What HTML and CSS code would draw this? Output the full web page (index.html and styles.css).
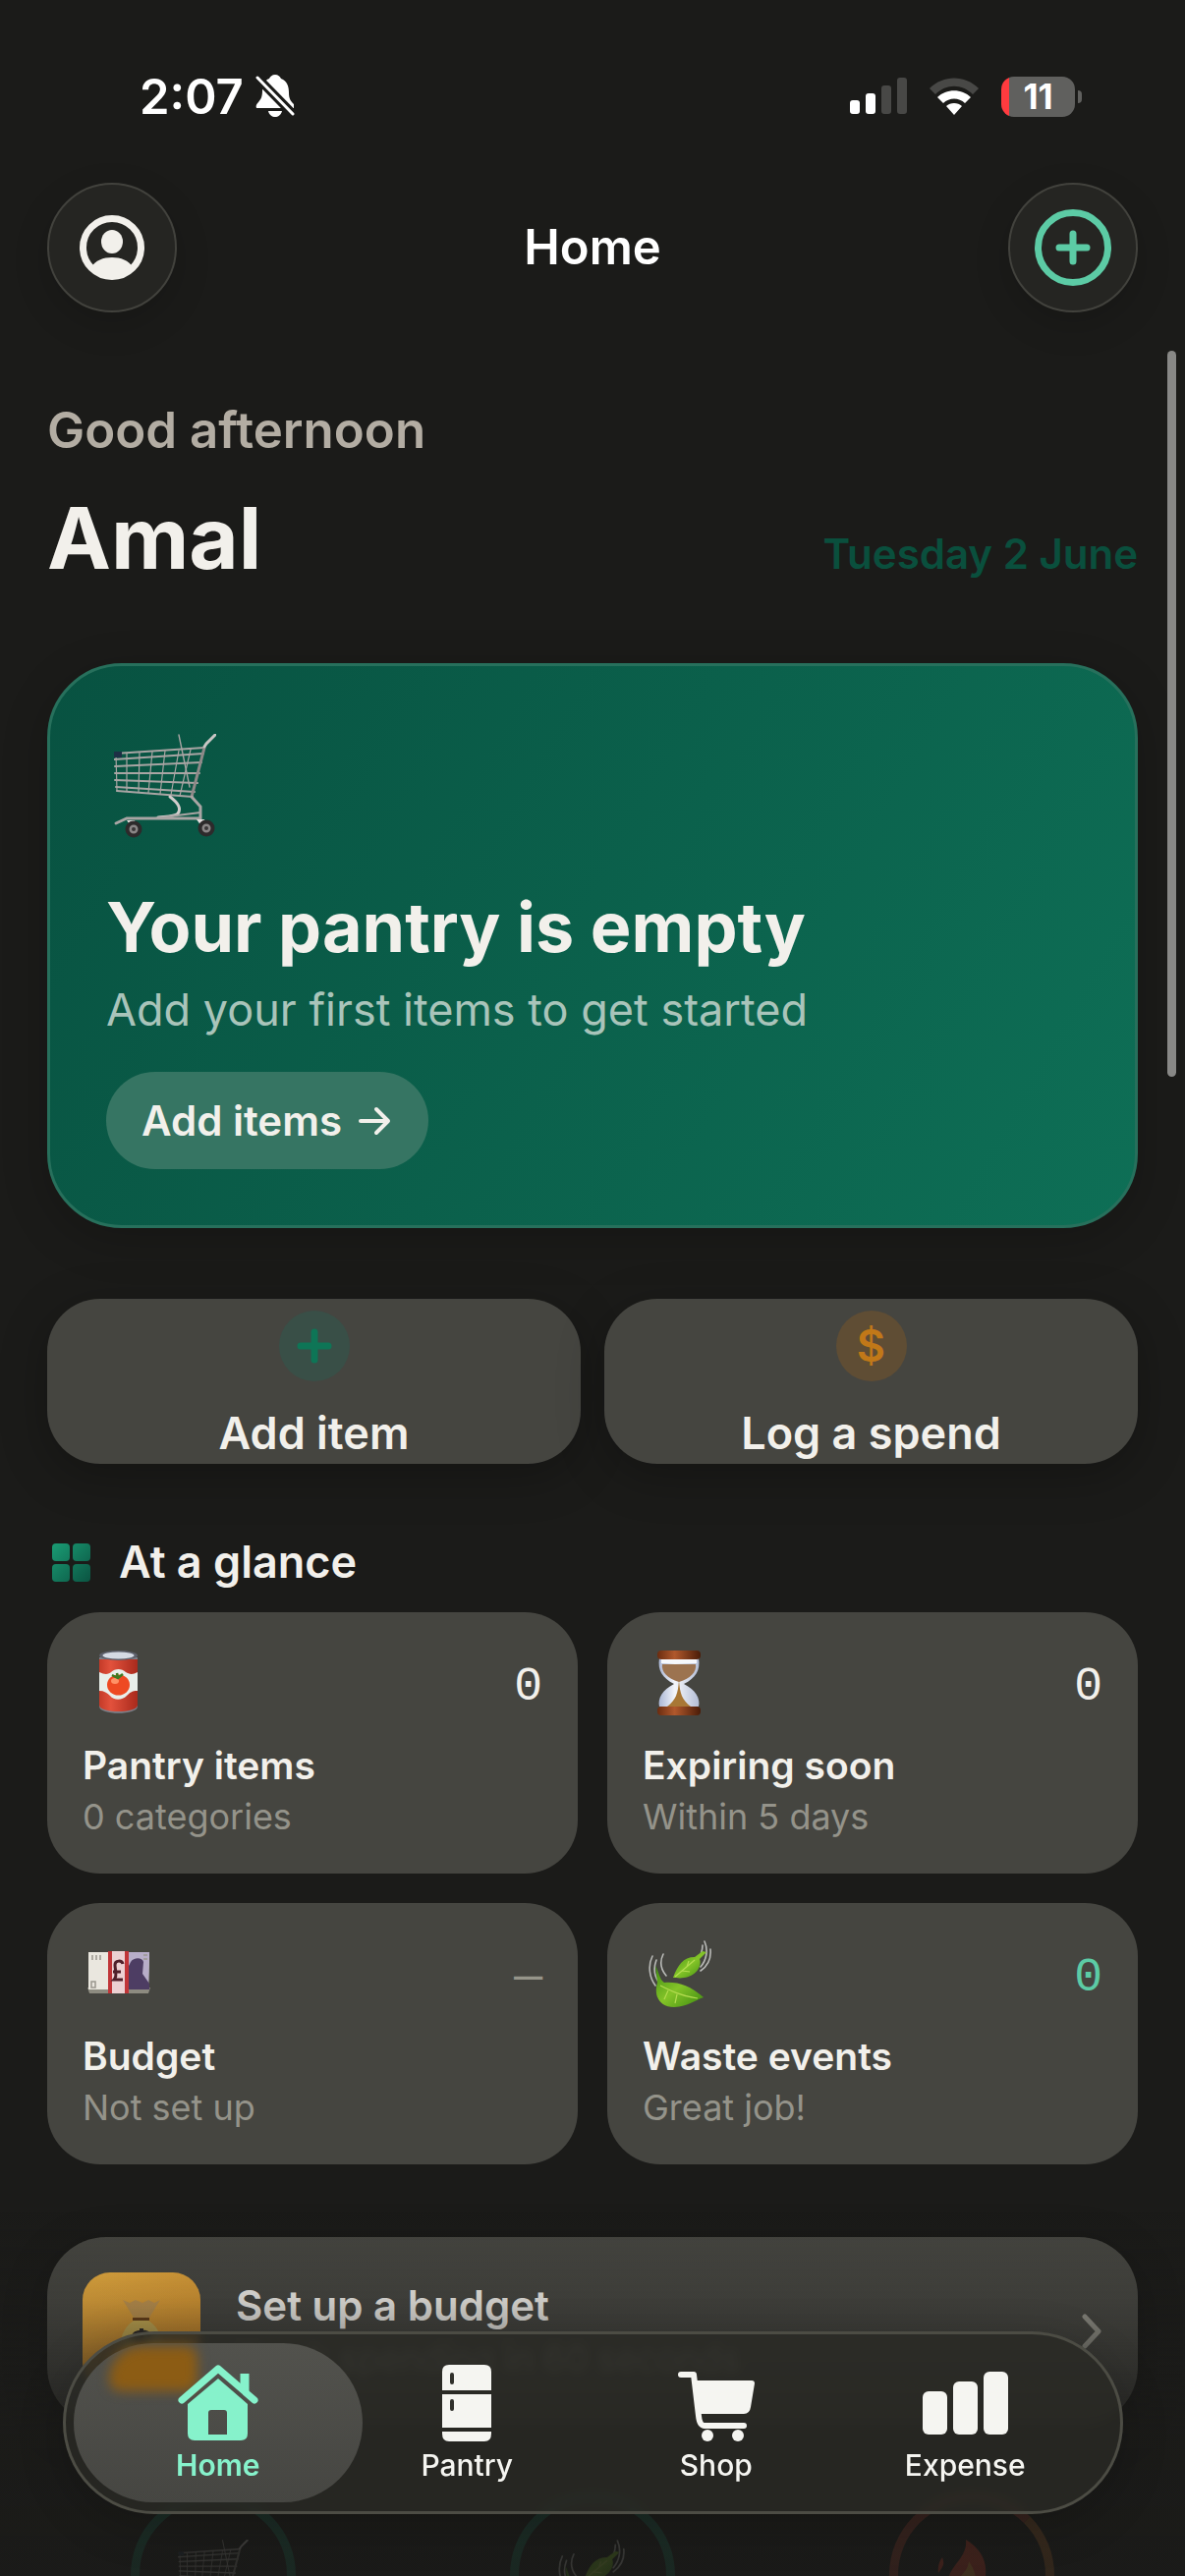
FILE: index.html
```html
<!DOCTYPE html>
<html lang="en">
<head>
<meta charset="utf-8">
<meta name="viewport" content="width=device-width, initial-scale=1">
<title>Home</title>
<link rel="stylesheet" href="styles.css">
</head>
<body>
<svg class="defs" width="0" height="0" aria-hidden="true">
  <defs>
    <linearGradient id="leaf-fill" x1="0" y1="0" x2="1" y2="1">
      <stop offset="0" stop-color="#3f8c14"/><stop offset=".5" stop-color="#84c428"/><stop offset="1" stop-color="#3d8a10"/>
    </linearGradient>
    <symbol id="cart" viewBox="0 0 104 106">
      <g fill="none" stroke="#a9a5a4" stroke-linecap="round">
        <path stroke-width="2" d="M1 20 92 14M0 26l91-6M1 33l88-4M1 40h86M1 47l84 3M2 54l80 5M3 58l77 6"/>
        <path stroke-width="1.200" d="M2 20l1 38M13 20v38M26 19l-1 40M39 18l-4 42M52 17l-5 44M66 17l-8 45M78 16 67 63"/>
        <path stroke-width="1.400" d="M66 1l11 53"/>
        <path stroke-width="3" stroke="#8d8988" d="M79 64 92 14"/>
        <path stroke-width="3" stroke="#c9c6c5" d="M92 13l2-3 9-9"/>
        <path stroke-width="3" stroke="#d0cccb" d="M57 64c8 6 12 12 8 17-3 3-11 3-20 4"/>
        <path stroke-width="3" d="M79 64l9 10v12H13L2 91"/>
        <path stroke-width="2" d="M88 80l-24 3-22 3"/>
      </g>
      <path fill="#1d2f45" d="M0 18h8v6H0z"/>
      <path fill="#e2dedd" d="M13 88h8l3 10h-4zM84 87h8l3 10h-4z"/>
      <g stroke="#2d2a2b" stroke-width="4" fill="#8a8686"><circle cx="20" cy="97" r="6.500"/><circle cx="94" cy="96" r="6.500"/></g>
      <g fill="#3a3738"><circle cx="20" cy="97" r="2"/><circle cx="94" cy="96" r="2"/></g>
    </symbol>
    <symbol id="leaves" viewBox="0 0 66 68">
      <g fill="none" stroke="#b9bab7" stroke-width="1.600" stroke-linecap="round">
        <path d="M4 16C-1 26 1 38 7 46M8 20c-3 8-2 16 2 22M15 14c-4 8-2 16 3 22"/>
        <path d="M55 5c0 6-2 11-6 16M57 1c4 9 2 19-4 26M63 9c1 9-3 17-10 22"/>
      </g>
      <path fill="url(#leaf-fill)" d="M25 38c5-13 10-21 22-21l8-6 4 1-7 7c3 8-5 18-16 19-4 1-8 0-11 0z"/>
      <path fill="url(#leaf-fill)" d="M7 26c3 4 4 14 9 17 14-1 26 3 40 15-9 3-15 9-30 10C11 68 5 56 9 43z"/>
      <path fill="none" stroke="#b4dc50" stroke-width="1.200" d="M12 46c10 5 22 11 38 13M27 37l20-17M20 51l-4 9M29 55l-2 9M34 31l8 1M39 27l2-6"/>
    </symbol>
  </defs>
</svg>

<div class="app">
  <div class="status">
    <div class="status-side">
      <span>2:07</span>
      <svg class="bell" viewBox="0 0 40 44" aria-label="Silent">
        <path fill="#fff" d="M20 0c3 0 5 2 6 4 6 2 8 8 8 14 0 7 2 9 5 12v4H1c-1-2 0-4 2-6 2-3 4-4 4-12C7 10 9 6 14 4c1-2 3-4 6-4z"/>
        <path fill="#fff" d="M13 37h14c-1 4-4 6-7 6s-6-2-7-6z"/>
        <path stroke="#1b1b19" stroke-width="9" d="M-1 0 41 43"/>
        <path stroke="#fff" stroke-width="3" stroke-linecap="round" d="M2 3 38 40"/>
      </svg>
    </div>
    <div class="status-side">
      <svg class="signal" viewBox="0 0 58 38" aria-label="Signal">
        <g fill="#fff"><rect y="23" width="10" height="14" rx="3"/><rect x="16" y="16" width="10" height="21" rx="3"/></g>
        <g fill="#484846"><rect x="32" y="8" width="10" height="29" rx="3"/><rect x="48" width="10" height="37" rx="3"/></g>
      </svg>
      <svg class="wifi" viewBox="0 0 52 38" aria-label="Wi-Fi">
        <path fill="#484846" d="M1 11C15-3 37-3 51 11l-6 6C34 6 18 6 7 17z"/>
        <path fill="#fff" d="M9 20c9-9 25-9 34 0l-6 6c-6-6-16-6-22 0zM18 29c4-4 12-4 16 0l-8 9z"/>
      </svg>
      <div class="battery"><span>11</span></div>
    </div>
  </div>

  <header class="topbar">
    <button class="round" type="button" aria-label="Profile">
      <svg width="66" height="66" viewBox="0 0 66 66">
        <circle cx="33" cy="33" r="29.500" fill="none" stroke="#f2f0eb" stroke-width="7"/>
        <ellipse cx="33" cy="27" rx="11" ry="12" fill="#f2f0eb"/>
        <path fill="#f2f0eb" d="M12 53c4-7 12-10 21-10s17 3 21 10C48 60 41 63 33 63s-15-3-21-10z"/>
      </svg>
    </button>
    <h1>Home</h1>
    <button class="round" type="button" aria-label="Add">
      <svg width="78" height="78" viewBox="0 0 78 78" fill="none" stroke="#5ccba5" stroke-width="7" stroke-linecap="round">
        <circle cx="39" cy="39" r="35.500"/><path d="M39 25v28M25 39h28"/>
      </svg>
    </button>
  </header>

  <main>
    <p class="greeting">Good afternoon</p>
    <div class="name-row">
      <h2>Amal</h2>
      <time datetime="06-02">Tuesday 2 June</time>
    </div>

    <section class="hero">
      <svg class="hero-cart" aria-hidden="true"><use href="#cart"/></svg>
      <h3>Your pantry is empty</h3>
      <p>Add your first items to get started</p>
      <button class="pill" type="button">Add items
        <svg width="34" height="30" viewBox="0 0 34 30" fill="none" stroke="#f2f0eb" stroke-width="4" stroke-linecap="round" stroke-linejoin="round"><path d="M3 15h28M19 3l12 12-12 12"/></svg>
      </button>
    </section>

    <div class="actions">
      <button type="button">
        <span class="badge badge-green"><svg width="36" height="36" viewBox="0 0 36 36" stroke="#0e7556" stroke-width="7" stroke-linecap="round"><path d="M18 4v28M4 18h28"/></svg></span>
        Add item
      </button>
      <button type="button">
        <span class="badge badge-amber">$</span>
        Log a spend
      </button>
    </div>

    <h3 class="section-title">
      <svg width="39" height="39" viewBox="0 0 39 39" aria-hidden="true">
        <defs><linearGradient id="grid-fill" gradientUnits="userSpaceOnUse" x1="0" y1="0" x2="39" y2="39"><stop offset="0" stop-color="#1a9c74"/><stop offset="1" stop-color="#0b5442"/></linearGradient></defs>
        <g fill="url(#grid-fill)"><rect width="18" height="18" rx="4"/><rect x="21" width="18" height="18" rx="4"/><rect y="21" width="18" height="18" rx="4"/><rect x="21" y="21" width="18" height="18" rx="4"/></g>
      </svg>
      At a glance
    </h3>

    <div class="tiles">
      <article class="tile">
        <div class="tile-top">
          <svg width="72" height="72" viewBox="0 0 72 72" aria-hidden="true">
            <defs><linearGradient id="can-red"><stop offset="0" stop-color="#c43a28"/><stop offset=".3" stop-color="#e2513c"/><stop offset="1" stop-color="#a92a1c"/></linearGradient></defs>
            <path fill="#7c7f88" d="M17 10v50c0 9 39 9 39 0V10z"/>
            <path fill="url(#can-red)" d="M17 12v47c2 8 37 8 39 0V12z"/>
            <path fill="#e9efea" d="M17 25c6 3 10 2 12 0 4-4 11-4 15 0 3 2 7 3 12 0v19c-6 0-8 2-11 5-5 5-13 5-17 0-3-3-6-5-11-5z"/>
            <ellipse cx="36.500" cy="8" rx="19.500" ry="5" fill="#5d606b"/><ellipse cx="36.500" cy="8" rx="16" ry="3.500" fill="#d5dae4"/>
            <ellipse cx="36.500" cy="38" rx="11.500" ry="10.500" fill="#ee4a22"/><ellipse cx="33" cy="34" rx="4" ry="3" fill="#ff9266"/>
            <path stroke="#3c7a20" stroke-width="2.500" fill="none" d="M30 28l6 3 5-4M36 31l-1-5"/>
          </svg>
          <span class="count">0</span>
        </div>
        <h4>Pantry items</h4>
        <p>0 categories</p>
      </article>
      <article class="tile">
        <div class="tile-top">
          <svg width="72" height="72" viewBox="0 0 72 72" aria-hidden="true">
            <defs>
              <linearGradient id="wood"><stop offset="0" stop-color="#6a2c10"/><stop offset=".4" stop-color="#b0582c"/><stop offset="1" stop-color="#4a1c08"/></linearGradient>
              <linearGradient id="glass"><stop offset="0" stop-color="#aab6d4"/><stop offset=".4" stop-color="#f4f6fb"/><stop offset="1" stop-color="#b4bed6"/></linearGradient>
            </defs>
            <path fill="url(#glass)" d="M17 11h40c2 12-3 20-15 26 12 6 17 15 15 23H17c-2-8 3-17 15-23C20 31 15 23 17 11z"/>
            <path fill="#9c7350" d="M20 17h34c1 8-5 14-17 18-12-4-18-10-17-18z"/>
            <path fill="#f6f8fc" d="M19 11h36v5H19z"/>
            <path fill="#a87735" d="M37 33c1 14 3 20 12 27H25c9-7 11-13 12-27z"/>
            <rect x="15" y="3" width="44" height="9" rx="4" fill="url(#wood)"/><rect x="15" y="60" width="44" height="9" rx="4" fill="url(#wood)"/>
          </svg>
          <span class="count">0</span>
        </div>
        <h4>Expiring soon</h4>
        <p>Within 5 days</p>
      </article>
      <article class="tile">
        <div class="tile-top">
          <svg width="72" height="72" viewBox="0 0 72 72" aria-hidden="true">
            <path fill="#8d8b80" d="M5 50h64l-2 6H7z"/>
            <path fill="#eae7df" d="M6 14h62l-1 38H6z"/>
            <path fill="#b7adc8" d="M44 14h24l-1 38H44z"/>
            <path fill="#4d3d63" d="M49 24c3-5 12-5 13 0l-1 12 7 10v6H46V30z"/>
            <path fill="none" stroke="#9a978f" stroke-width="1.500" d="M10 17v5M14 17v5M18 17v5M62 17h4M62 21h4M9 44h4v6H9z"/>
            <path fill="#ecd0d2" d="M29 13h15v43H29z"/><path fill="#c03538" d="M26 13h4v43h-4zM43 13h4v43h-4z"/>
            <path fill="none" stroke="#50202a" stroke-width="3" d="M41 26c-1-4-8-4-8 1 0 5 3 11-1 15h9M31 34h8"/>
          </svg>
          <span class="count muted">—</span>
        </div>
        <h4>Budget</h4>
        <p>Not set up</p>
      </article>
      <article class="tile">
        <div class="tile-top">
          <svg class="tile-leaves" aria-hidden="true"><use href="#leaves"/></svg>
          <span class="count good">0</span>
        </div>
        <h4>Waste events</h4>
        <p>Great job!</p>
      </article>
    </div>

    <a class="budget" href="#budget">
      <span class="budget-icon">
        <svg width="60" height="66" viewBox="0 0 60 66" aria-hidden="true">
          <path fill="#c09450" d="M11 1l7 3 6-3 7 3 6-3 6 3 6-3-11 18H22z"/><path fill="#6a4018" d="M21 19h17v3H21z"/>
          <path fill="#cbae54" d="M22 22h15c8 5 14 14 13 27-1 13-40 13-41 0-1-14 6-22 13-27z"/>
          <path fill="none" stroke="#2e2a28" stroke-width="4" d="M39 38c-3-6-17-6-17 1 0 6 16 4 16 10 0 6-14 6-17 1M30 30v27"/>
        </svg>
      </span>
      <span class="budget-text"><strong>Set up a budget</strong><span>Track spending in 60 seconds</span></span>
      <svg width="21" height="36" viewBox="0 0 21 36" fill="none" stroke="#94938a" stroke-width="5" stroke-linecap="round" stroke-linejoin="round" aria-hidden="true"><path d="M3 3l14 15L3 33"/></svg>
    </a>

    <div class="rings">
      <div class="ring ring-green"><svg aria-hidden="true"><use href="#cart"/></svg></div>
      <div class="ring ring-green"><svg aria-hidden="true"><use href="#leaves"/></svg></div>
      <div class="ring ring-fire">
        <svg viewBox="0 0 72 72" aria-hidden="true"><path fill="#d8402a" d="M30 0c14 8 22 22 20 36 5 16-4 34-20 35-16 0-26-16-18-30C14 26 32 18 30 0zM6 18c3 8 0 10-4 16-1-7 1-12 4-16z"/><path fill="#f2963a" d="M33 22c12 16 10 46-5 46-12-4-14-20-5-29 5-5 9-9 10-17z"/></svg>
      </div>
    </div>
  </main>
</div>

<div class="fade"></div>
<div class="scrollbar"></div>

<nav class="tabs">
  <a class="tab active" href="#home" aria-current="page">
    <svg width="84" height="78" viewBox="0 0 84 78" aria-hidden="true">
      <g fill="none" stroke="#86f2cb" stroke-linecap="round" stroke-linejoin="round"><path stroke-width="7" d="M5 36 42 4l37 32"/><path stroke-width="9" stroke-linecap="butt" d="M69 9v18"/></g>
      <path fill="#86f2cb" fill-rule="evenodd" d="M42 14l30 26v30q0 7-7 7H18q-7 0-7-7V40zM35 46q-3 0-3 3v22h19V49q0-3-3-3z"/>
    </svg>
    Home
  </a>
  <a class="tab" href="#pantry">
    <svg width="50" height="78" viewBox="0 0 50 78" aria-hidden="true">
      <path fill="#f5f5f1" d="M0 26V7q0-7 7-7h36q7 0 7 7v19zM0 30h50v34H0zM0 68h50v2q0 8-7 8H7q-7 0-7-8z"/>
      <path stroke="#30302b" stroke-width="4" stroke-linecap="round" d="M10 10v8M10 37v8"/>
    </svg>
    Pantry
  </a>
  <a class="tab" href="#shop">
    <svg width="80" height="78" viewBox="0 0 80 78" aria-hidden="true">
      <path fill="none" stroke="#f5f5f1" stroke-width="6" stroke-linecap="round" stroke-linejoin="round" d="M4 10h13l5 42q1 10 6 10h40"/>
      <path fill="#f5f5f1" d="M19 16h57q3 0 3 3l-4 24q-1 7-7 7H22z"/>
      <ellipse cx="31" cy="72" rx="6" ry="6" fill="#f5f5f1"/><ellipse cx="62" cy="72" rx="6" ry="6" fill="#f5f5f1"/>
    </svg>
    Shop
  </a>
  <a class="tab" href="#expense">
    <svg width="87" height="78" viewBox="0 0 87 78" fill="#f5f5f1" aria-hidden="true">
      <rect y="27" width="25" height="44" rx="6"/><rect x="31" y="17" width="25" height="54" rx="6"/><rect x="62" y="7" width="25" height="64" rx="6"/>
    </svg>
    Expense
  </a>
</nav>
</body>
</html>
```
FILE: styles.css
```css
* { box-sizing: border-box; }

body {
  margin: 0;
  height: 100vh;
  overflow: hidden;
  background: #1b1b19;
  color: #f2f0eb;
  font-family: Inter, "Liberation Sans", sans-serif;
}

h1, h2, h3, h4, p { margin: 0; }
button { border: 0; padding: 0; background: none; color: inherit; font-family: inherit; }
a { color: inherit; text-decoration: none; }
svg { display: block; flex: none; }
.defs { position: absolute; }

.app { padding: 0 48px; }

/* status bar */
.status {
  display: flex;
  justify-content: space-between;
  align-items: center;
  height: 52px;
  margin-top: 72px;
  padding: 0 56px 0 94px;
  color: #fff;
  font-size: 49px;
  font-weight: 600;
}
.status-side { display: flex; align-items: center; }
.bell { width: 40px; height: 44px; margin-left: 12px; }
.signal { width: 58px; height: 38px; }
.wifi { width: 52px; height: 38px; margin: 0 22px; }
.battery {
  position: relative;
  width: 75px;
  height: 41px;
  margin-right: 8px;
  border-radius: 13px;
  background: linear-gradient(90deg, #ff3b3f 8px, #60605e 8px);
  font-size: 35px;
  font-weight: 700;
  line-height: 41px;
  text-align: center;
}
.battery::after {
  content: "";
  position: absolute;
  left: 78px;
  top: 14px;
  width: 4px;
  height: 13px;
  border-radius: 0 4px 4px 0;
  background: #60605e;
}

/* header */
.topbar {
  display: flex;
  justify-content: space-between;
  align-items: center;
  margin-top: 62px;
}
.topbar h1 { color: #fff; font-size: 49px; line-height: 60px; font-weight: 600; }
.round {
  display: grid;
  place-items: center;
  width: 132px;
  height: 132px;
  border-radius: 50%;
  border: 2px solid #42423d;
  background: #252522;
  box-shadow: 0 12px 36px rgba(0, 0, 0, .15);
}

/* greeting */
.greeting { margin-top: 90px; color: #b3ada3; font-size: 51px; line-height: 60px; font-weight: 600; }
.name-row { display: flex; justify-content: space-between; align-items: baseline; margin-top: 26px; }
.name-row h2 { font-size: 87px; line-height: 108px; font-weight: 700; }
.name-row time { color: #0a4f3d; font-size: 42px; line-height: 54px; font-weight: 600; }

/* hero card */
.hero {
  margin-top: 73px;
  padding: 57px;
  border: 3px solid #27705c;
  border-radius: 76px;
  background: linear-gradient(120deg, #085241, #0e6f56);
  box-shadow: 0 12px 48px rgba(0, 0, 0, .2);
}
.hero-cart { width: 104px; height: 106px; margin: 12px 0 47px 8px; }
.hero h3 { font-size: 70px; line-height: 88px; font-weight: 700; }
.hero p { margin-top: 12px; color: #a9c4ba; font-size: 45px; line-height: 56px; }
.pill {
  display: flex;
  align-items: center;
  gap: 16px;
  height: 99px;
  margin-top: 35px;
  padding: 0 38px 0 36px;
  border-radius: 50px;
  background: #367563;
  font-size: 42px;
  font-weight: 600;
}

/* quick actions */
.actions { display: grid; grid-template-columns: 1fr 1fr; gap: 24px; margin-top: 72px; }
.actions button {
  display: flex;
  flex-direction: column;
  align-items: center;
  gap: 26px;
  padding: 12px 0 4px;
  border-radius: 54px;
  background: #454540;
  font-size: 45px;
  line-height: 54px;
  font-weight: 600;
  box-shadow: 0 12px 48px rgba(0, 0, 0, .25);
}
.badge { display: grid; place-items: center; width: 72px; height: 72px; border-radius: 50%; }
.badge-green { background: #394f47; }
.badge-amber { background: #5f4d34; color: #c17818; }

/* at a glance */
.section-title {
  display: flex;
  align-items: center;
  gap: 29px;
  margin-top: 73px;
  padding-left: 5px;
  font-size: 45px;
  line-height: 54px;
  font-weight: 600;
}
.tiles { display: grid; grid-template-columns: 1fr 1fr; gap: 30px; margin-top: 24px; }
.tile { padding: 36px; border-radius: 54px; background: #454540; }
.tile-top { display: flex; justify-content: space-between; align-items: center; height: 72px; margin-bottom: 24px; }
.tile-leaves { width: 66px; height: 68px; margin-left: 6px; }
.count { padding-top: 8px; font-family: "Liberation Mono", monospace; font-size: 48px; line-height: 64px; }
.muted { color: #96958a; }
.good { color: #5ccba5; }
.tile h4 { font-size: 39px; line-height: 48px; font-weight: 600; }
.tile p { margin-top: 6px; color: #94938a; font-size: 36px; line-height: 44px; }

/* budget prompt */
.budget {
  display: flex;
  align-items: center;
  gap: 36px;
  margin-top: 74px;
  padding: 36px;
  border-radius: 60px;
  background: #454540;
  box-shadow: 0 12px 48px rgba(0, 0, 0, .2);
}
.budget-icon {
  display: grid;
  place-items: center;
  width: 120px;
  height: 120px;
  border-radius: 28px;
  background: linear-gradient(160deg, #e8ad40, #c07c24);
}
.budget-text { display: flex; flex: 1; flex-direction: column; gap: 4px; }
.budget-text strong { font-size: 42px; line-height: 52px; font-weight: 600; }
.budget-text span { color: #94938a; font-size: 36px; line-height: 48px; }

/* progress rings */
.rings { display: grid; grid-template-columns: repeat(3, 1fr); justify-items: center; margin: 68px -24px 0; }
.ring { display: grid; place-items: center; width: 168px; height: 168px; border: 9px solid; border-radius: 50%; }
.ring svg { width: 72px; height: 72px; }
.ring-green { border-color: #1b6d55; }
.ring-fire { border-color: #a04030 #a0602c #a0602c #a04030; }

/* overlays */
.fade {
  position: fixed;
  left: 0;
  right: 0;
  bottom: 0;
  height: 372px;
  background: linear-gradient(rgba(27, 27, 25, 0), rgba(27, 27, 25, .18) 25%, rgba(27, 27, 25, .76) 60%, rgba(27, 27, 25, .84));
}
.scrollbar {
  position: fixed;
  top: 357px;
  right: 9px;
  width: 9px;
  height: 739px;
  border-radius: 5px;
  background: #888886;
}

/* tab bar */
.tabs {
  position: fixed;
  left: 64px;
  right: 63px;
  bottom: 63px;
  display: grid;
  grid-template-columns: repeat(4, 1fr);
  height: 186px;
  padding: 0 31px 0 28px;
  border: 3px solid #4c4c44;
  border-radius: 93px;
  background: rgba(42, 42, 37, .82);
  backdrop-filter: blur(4px);
  box-shadow: 0 12px 48px rgba(0, 0, 0, .2);
}
.tab {
  position: relative;
  display: flex;
  flex-direction: column;
  align-items: center;
  gap: 6px;
  padding-top: 31px;
  color: #f5f5f1;
  font-size: 30px;
  line-height: 36px;
  font-weight: 500;
}
.active { color: #86f2cb; font-weight: 600; }
.active::before {
  content: "";
  position: absolute;
  inset: 9px -20px;
  z-index: -1;
  border-radius: 81px;
  background: linear-gradient(#52524d, #464642);
}
/* amber light picked up by the glass */
.active::after {
  content: "";
  position: absolute;
  left: 16px;
  top: 12px;
  z-index: -1;
  width: 90px;
  height: 46px;
  border-radius: 40px 14px 14px 14px;
  background: #8c5c14;
  filter: blur(6px);
}
```
